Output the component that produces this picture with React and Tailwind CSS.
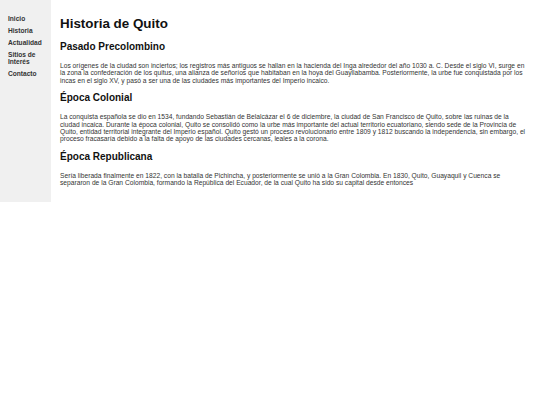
import React from 'react';

const links = ['Inicio', 'Historia', 'Actualidad', 'Sitios de Interés', 'Contacto'];

const sections = [
  {
    title: 'Pasado Precolombino',
    text: 'Los orígenes de la ciudad son inciertos; los registros más antiguos se hallan en la hacienda del Inga alrededor del año 1030 a. C. Desde el siglo VI, surge en la zona la confederación de los quitus, una alianza de señoríos que habitaban en la hoya del Guayllabamba. Posteriormente, la urbe fue conquistada por los incas en el siglo XV, y pasó a ser una de las ciudades más importantes del Imperio incaico.',
  },
  {
    title: 'Época Colonial',
    text: 'La conquista española se dio en 1534, fundando Sebastián de Belalcázar el 6 de diciembre, la ciudad de San Francisco de Quito, sobre las ruinas de la ciudad incaica. Durante la época colonial, Quito se consolidó como la urbe más importante del actual territorio ecuatoriano, siendo sede de la Provincia de Quito, entidad territorial integrante del Imperio español. Quito gestó un proceso revolucionario entre 1809 y 1812 buscando la independencia, sin embargo, el proceso fracasaría debido a la falta de apoyo de las ciudades cercanas, leales a la corona.',
  },
  {
    title: 'Época Republicana',
    text: 'Sería liberada finalmente en 1822, con la batalla de Pichincha, y posteriormente se unió a la Gran Colombia. En 1830, Quito, Guayaquil y Cuenca se separaron de la Gran Colombia, formando la República del Ecuador, de la cual Quito ha sido su capital desde entonces',
  },
];

export default function App() {
  return (
    <div className="flex bg-white font-['Liberation_Sans',Arial,sans-serif] text-[#222]">
      {/* sidebar */}
      <aside className="w-[51px] shrink-0 bg-[#f0f0f0] pl-2 pr-[5px] pt-[14.5px]">
        <nav className="flex flex-col gap-[5px]">
          {links.map((l) => (
            <div key={l} className="text-[6.6px] leading-[7px] font-bold text-[#333]">
              {l}
            </div>
          ))}
        </nav>
      </aside>

      {/* contenido */}
      <main className="flex-1 pl-[9px] pr-[10px] pt-4 pb-[15px]">
        <h1 className="text-[13.4px] leading-[16px] font-bold text-[#111]">Historia de Quito</h1>
        {sections.map((s, i) => (
          <section key={s.title}>
            <h2 className={`text-[10px] leading-[12px] font-bold text-[#111] ${i === 0 ? 'mt-[9px]' : 'mt-[8.5px]'}`}>
              {s.title}
            </h2>
            <p className="mt-[9px] text-[6.68px] leading-[7.3px] text-[#333]">{s.text}</p>
          </section>
        ))}
      </main>
    </div>
  );
}
